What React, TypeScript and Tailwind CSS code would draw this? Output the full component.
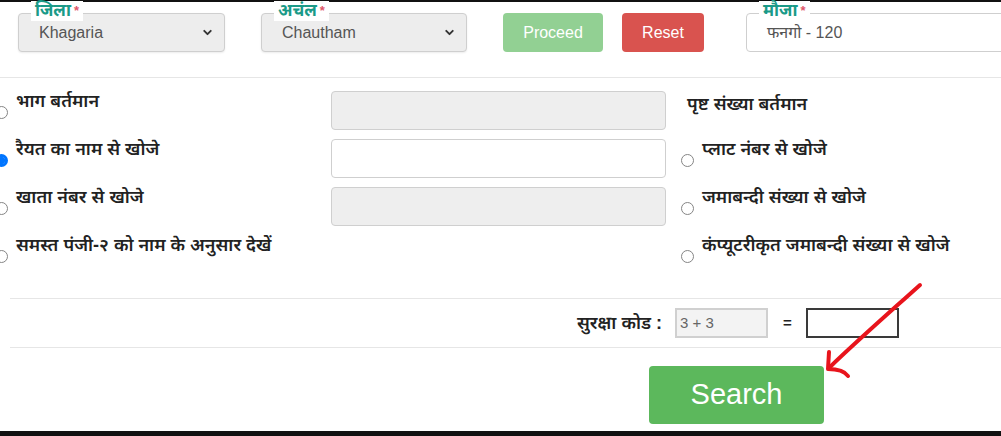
import { ChevronDown } from "lucide-react";

const hindi = { fontFamily: '"Liberation Sans", "Noto Sans Devanagari", "Noto Sans", sans-serif' };

const Radio = ({ checked = false }: { checked?: boolean }) => (
  <span
    className={
      checked
        ? "mt-[15px] size-[13px] shrink-0 rounded-full border-[3px] border-[#0075ff] bg-white ring-1 ring-[#0075ff] ring-inset"
        : "mt-[15px] size-[13px] shrink-0 rounded-full border border-[#858585] bg-white"
    }
  >
    {checked && <span className="block size-full rounded-full bg-[#0075ff]" />}
  </span>
);

const FieldLabel = ({ text }: { text: string }) => (
  <span
    className="absolute -top-[12px] left-[13px] bg-white px-[4px] text-[17px] leading-[20px] font-bold text-[#1a9a88]"
    style={hindi}
  >
    {text}
    <span className="ml-[3px] align-top text-[13px] text-[#e0566a]">*</span>
  </span>
);

const SelectBox = ({ label, value, width }: { label: string; value: string; width: string }) => (
  <div className={`relative h-[39px] ${width} shrink-0`}>
    <FieldLabel text={label} />
    <div className="flex h-full items-center justify-between rounded-[4px] border border-[#cfcfcf] bg-[#ededed] pr-[10px] pl-[20px] shadow-[0_1px_2px_rgba(0,0,0,0.08)]">
      <span className="text-[16px] text-[#555]">{value}</span>
      <ChevronDown className="size-[13px] text-[#333]" strokeWidth={3.5} />
    </div>
  </div>
);

const rows = [
  { left: "भाग बर्तमान", leftChecked: false, disabled: true, right: "पृष्ट संख्या बर्तमान", rightRadio: false },
  { left: "रैयत का नाम से खोजे", leftChecked: true, disabled: false, right: "प्लाट नंबर से खोजे", rightRadio: true },
  { left: "खाता नंबर से खोजे", leftChecked: false, disabled: true, right: "जमाबन्दी संख्या से खोजे", rightRadio: true },
  { left: "समस्त पंजी-२ को नाम के अनुसार देखें", leftChecked: false, disabled: null, right: "कंप्यूटरीकृत जमाबन्दी संख्या से खोजे", rightRadio: true },
];

export default function App() {
  return (
    <div className="relative h-[436px] w-[1001px] overflow-hidden bg-white" style={{ fontFamily: '"Liberation Sans", Arial, sans-serif' }}>
      <div className="h-[2px] bg-[#111]" />

      {/* Top filters */}
      <div className="flex h-[76px] items-start border-b border-[#e6e6e6] pt-[11px] pl-[18px]">
        <SelectBox label="जिला" value="Khagaria" width="w-[207px]" />
        <div className="ml-[36px] shrink-0">
          <SelectBox label="अचंल" value="Chautham" width="w-[206px]" />
        </div>
        <button className="ml-[36px] h-[39px] w-[100px] shrink-0 rounded-[4px] bg-[#92d093] text-[16px] text-white">Proceed</button>
        <button className="ml-[19px] h-[39px] w-[82px] shrink-0 rounded-[4px] bg-[#d9534f] text-[16px] text-white">Reset</button>
        <div className="relative ml-[42px] h-[39px] w-[270px] shrink-0">
          <FieldLabel text="मौजा" />
          <div className="flex h-full items-center rounded-[4px] border border-[#cfcfcf] bg-white pl-[20px] text-[16px] text-[#555]" style={hindi}>
            फनगो - 120
          </div>
        </div>
      </div>

      {/* Search options */}
      <div className="ml-[10px] border-b border-[#e6e6e6] pt-[13px] pb-[15px]">
        {rows.map((r, i) => (
          <div key={i} className="-ml-[15px] flex h-[48px] items-start">
            <div className="flex w-[336px] shrink-0 items-start gap-[8px]">
              <Radio checked={r.leftChecked} />
              <span className="text-[18px] leading-[20px] font-semibold whitespace-nowrap text-[#222]" style={hindi}>
                {r.left}
              </span>
            </div>
            <div className="w-[335px] shrink-0">
              {r.disabled !== null && (
                <div
                  className={
                    r.disabled
                      ? "h-[39px] rounded-[4px] border border-[#cfcfcf] bg-[#eeeeee]"
                      : "h-[39px] rounded-[4px] border border-[#cfcfcf] bg-white"
                  }
                />
              )}
            </div>
            <div className={r.rightRadio ? "ml-[15px] flex shrink-0 items-start gap-[8px]" : "ml-[21px] flex shrink-0 items-start"}>
              {r.rightRadio && <Radio />}
              <span
                className={
                  r.rightRadio
                    ? "text-[18px] leading-[20px] font-semibold whitespace-nowrap text-[#222]"
                    : "pt-[3px] text-[18px] leading-[20px] font-semibold whitespace-nowrap text-[#222]"
                }
                style={hindi}
              >
                {r.right}
              </span>
            </div>
          </div>
        ))}
      </div>

      {/* Captcha */}
      <div className="ml-[10px] flex h-[49px] items-center justify-end border-b border-[#e6e6e6] pr-[102px]">
        <span className="text-[18px] font-semibold text-[#222]" style={hindi}>
          सुरक्षा कोड :
        </span>
        <div className="ml-[13px] flex h-[30px] w-[93px] shrink-0 items-center border-2 border-[#d0d0d0] bg-[#f3f3f3] pl-[3px] text-[15px] text-[#666]">
          3 + 3
        </div>
        <span className="ml-[15px] w-[8px] text-[15px] font-bold text-[#222]">=</span>
        <div className="ml-[15px] h-[30px] w-[93px] shrink-0 border-2 border-[#3a3a3a] bg-white" />
      </div>

      {/* Submit */}
      <div className="flex pt-[18px]">
        <div className="w-[472px] shrink-0" />
        <div className="flex flex-1 justify-center">
          <button className="h-[58px] w-[175px] rounded-[4px] bg-[#5cb85c] text-[29px] text-white">Search</button>
        </div>
      </div>

      <div className="absolute right-0 bottom-0 left-0 h-[5px] bg-[#111]" />

      {/* Red annotation arrow */}
      <svg className="pointer-events-none absolute top-0 left-0" width="1001" height="436" viewBox="0 0 1001 436">
        <path d="M920 285 C 890 312, 858 340, 830 367" fill="none" stroke="#e8141c" strokeWidth="4" strokeLinecap="round" />
        <path d="M829 352 L 828 369 C 836 369, 844 370, 848 376" fill="none" stroke="#e8141c" strokeWidth="4" strokeLinecap="round" strokeLinejoin="round" />
      </svg>
    </div>
  );
}
